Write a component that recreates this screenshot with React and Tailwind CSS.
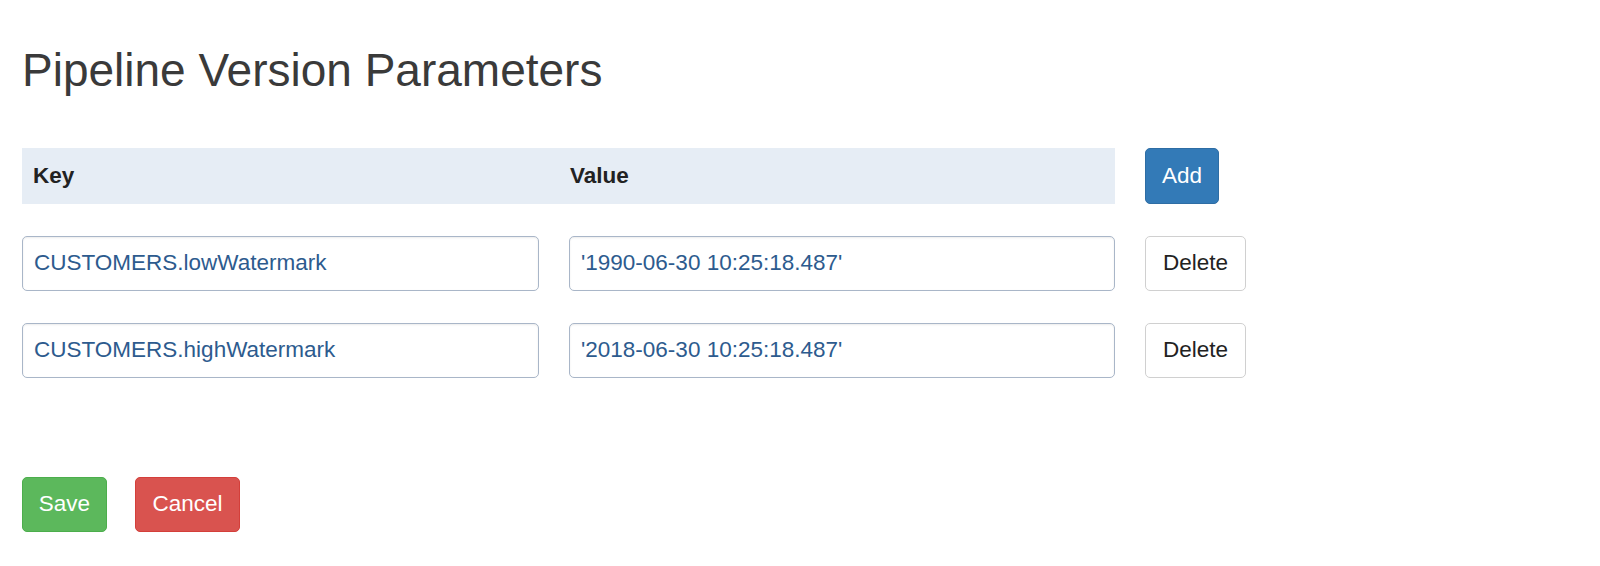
import React, { useState } from "react";

function App() {
    const [params, setParams] = useState([
        { key: "CUSTOMERS.lowWatermark", value: "'1990-06-30 10:25:18.487'" },
        { key: "CUSTOMERS.highWatermark", value: "'2018-06-30 10:25:18.487'" },
    ]);

    function update(idx, field, val) {
        setParams(params.map((p, i) => (i === idx ? { ...p, [field]: val } : p)));
    }

    return (
        <div className="min-h-[566px] bg-white px-[22px] pt-[45px] font-['Liberation_Sans',Arial,sans-serif] text-[#333]">
            <h2 className="text-[46px] font-normal leading-[1.1] text-[#3a3a3a]">
                Pipeline Version Parameters
            </h2>

            {/* Header row */}
            <div className="mt-[52px] flex items-center gap-[30px]">
                <div className="flex h-[56px] w-[1093px] items-center bg-[#e6edf5] text-[22.5px] font-bold text-[#222]">
                    <div className="w-[547px] pl-[11px]">Key</div>
                    <div className="pl-[1px]">Value</div>
                </div>
                <button className="h-[56px] rounded-[5px] border border-[#2e6da4] bg-[#337ab7] px-[16px] text-[22.5px] text-white">
                    Add
                </button>
            </div>

            {/* Param rows */}
            <div className="mt-[32px] flex flex-col gap-[32px]">
                {params.map((p, idx) => (
                    <div key={idx} className="flex items-center gap-[30px]">
                        <input
                            value={p.key}
                            onChange={(e) => update(idx, "key", e.target.value)}
                            className="h-[55px] w-[517px] rounded-[5px] border-[1.5px] border-[#a9b6c8] px-[11px] text-[22.5px] text-[#2d5b8e] shadow-[inset_0_1px_2px_rgba(0,0,0,0.08)] outline-none"
                        />
                        <input
                            value={p.value}
                            onChange={(e) => update(idx, "value", e.target.value)}
                            className="h-[55px] w-[546px] rounded-[5px] border-[1.5px] border-[#a9b6c8] px-[11px] text-[22.5px] text-[#2d5b8e] shadow-[inset_0_1px_2px_rgba(0,0,0,0.08)] outline-none"
                        />
                        <button
                            onClick={() => setParams(params.filter((_, i) => i !== idx))}
                            className="h-[55px] w-[101px] rounded-[5px] border-[1.5px] border-[#d0d0d0] bg-white text-[22.5px] text-[#222]"
                        >
                            Delete
                        </button>
                    </div>
                ))}
            </div>

            {/* Footer buttons */}
            <div className="mt-[99px] flex gap-[28px]">
                <button className="h-[55px] w-[85px] rounded-[5px] border border-[#4cae4c] bg-[#5cb85c] text-[22.5px] text-white">
                    Save
                </button>
                <button className="h-[55px] w-[105px] rounded-[5px] border border-[#d43f3a] bg-[#d9534f] text-[22.5px] text-white">
                    Cancel
                </button>
            </div>
        </div>
    );
}

export default App;
